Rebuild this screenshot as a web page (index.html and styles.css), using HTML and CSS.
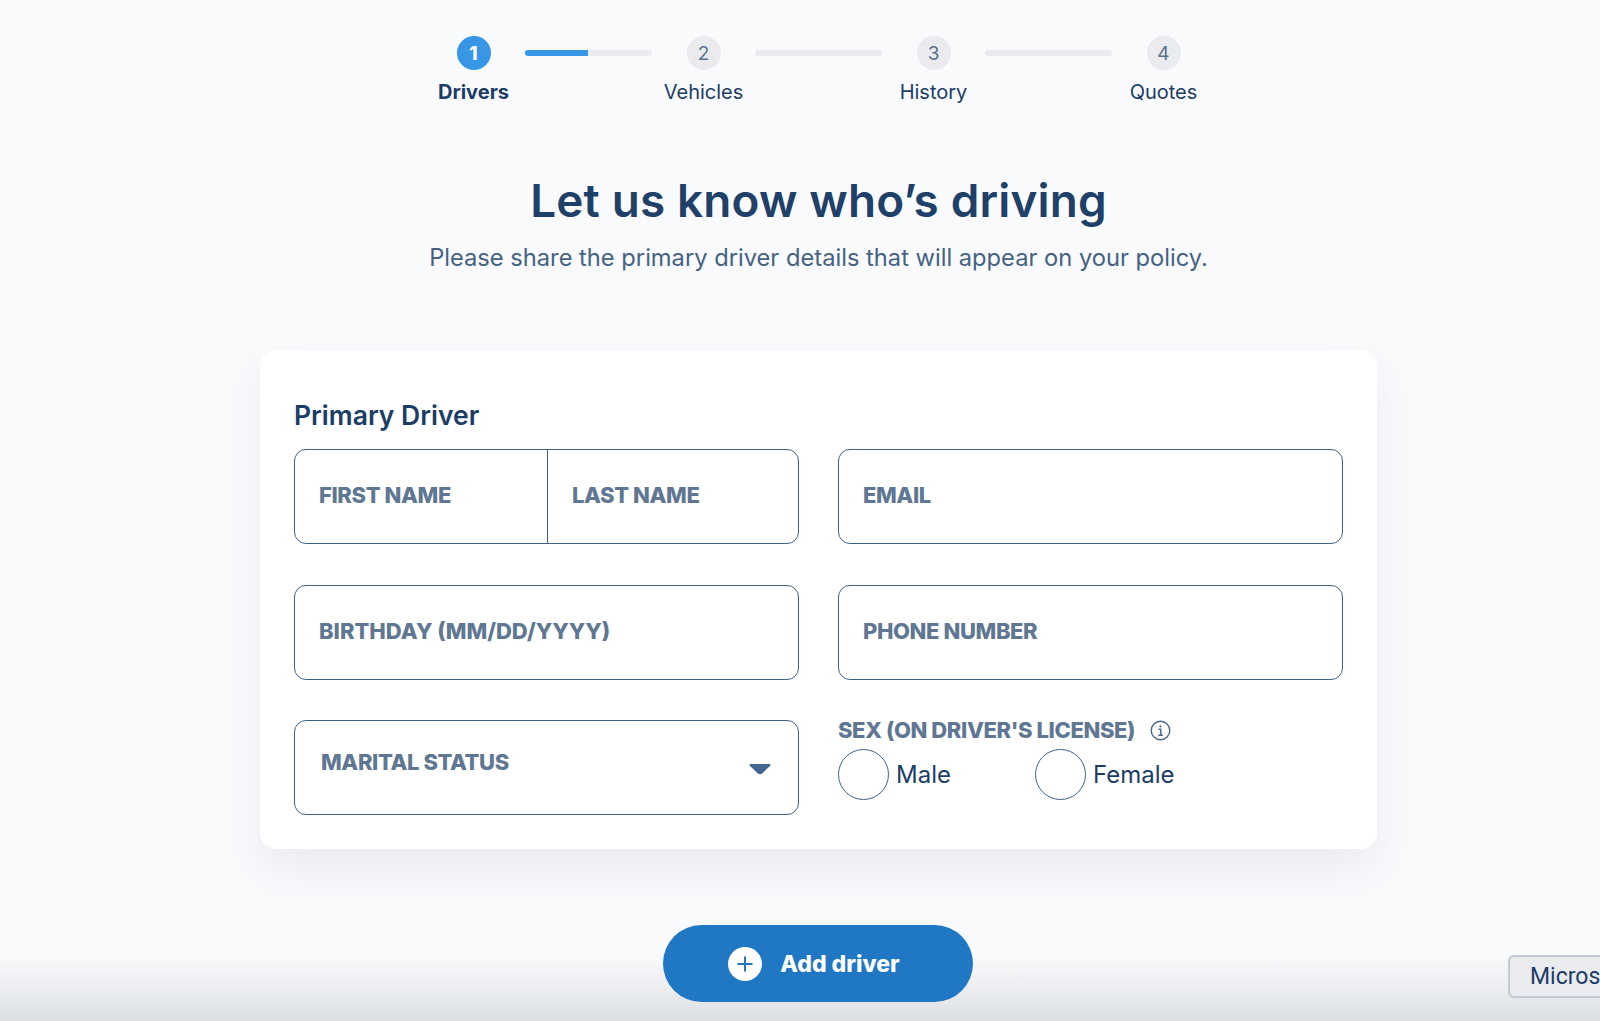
FILE: index.html
```html
<!DOCTYPE html>
<html lang="en">
<head>
  <meta charset="UTF-8" />
  <meta name="viewport" content="width=device-width, initial-scale=1.0"/>
  <title>Drivers</title>
  <link rel="stylesheet" href="styles.css">
</head>
<body>

  <main class="page">

    <!-- Steps -->
    <div class="stepper">
      <div class="step active">
        <span class="step-num">1</span>
        <span class="step-name">Drivers</span>
      </div>
      <div class="step-bar"><div class="step-fill"></div></div>
      <div class="step">
        <span class="step-num">2</span>
        <span class="step-name">Vehicles</span>
      </div>
      <div class="step-bar"></div>
      <div class="step">
        <span class="step-num">3</span>
        <span class="step-name">History</span>
      </div>
      <div class="step-bar"></div>
      <div class="step">
        <span class="step-num">4</span>
        <span class="step-name">Quotes</span>
      </div>
    </div>

    <h1 class="title">Let us know who’s driving</h1>
    <p class="subtitle">Please share the primary driver details that will appear on your policy.</p>

    <!-- Form card -->
    <section class="card">
      <h2 class="card-title">Primary Driver</h2>
      <div class="form-grid">
        <div class="field field-split">
          <div class="field-part"><span class="field-label">FIRST NAME</span></div>
          <div class="field-part field-part-last"><span class="field-label">LAST NAME</span></div>
        </div>
        <div class="field"><span class="field-label">EMAIL</span></div>
        <div class="field"><span class="field-label label-birthday">BIRTHDAY (MM/DD/YYYY)</span></div>
        <div class="field"><span class="field-label">PHONE NUMBER</span></div>
        <div class="field field-select">
          <span class="field-label">MARITAL STATUS</span>
          <svg class="caret" width="22" height="12" viewBox="0 0 22 12">
            <path d="M1.5 1h19a1 1 0 0 1 .7 1.700l-7.500 7.300a4 4 0 0 1-5.400 0L.8 2.700A1 1 0 0 1 1.500 1z" fill="#42668f"/>
          </svg>
        </div>
        <div class="sex-group">
          <div class="sex-title">
            <span class="field-label">SEX (ON DRIVER'S LICENSE)</span>
            <svg class="info-icon" width="21" height="21" viewBox="0 0 21 21" fill="none" stroke="#4f6a88">
              <circle cx="10.500" cy="10.500" r="9.300" stroke-width="1.400"/>
              <circle cx="10.500" cy="6.300" r="1.100" fill="#4f6a88" stroke="none"/>
              <path d="M8.500 9.300h2.300v5.800M8.300 15.200h4.600" stroke-width="1.500"/>
            </svg>
          </div>
          <div class="radios">
            <label class="radio"><span class="radio-dot"></span>Male</label>
            <label class="radio"><span class="radio-dot"></span>Female</label>
          </div>
        </div>
      </div>
    </section>

    <button class="add-btn">
      <svg width="34" height="34" viewBox="0 0 34 34">
        <circle cx="17" cy="17" r="17" fill="#fff"/>
        <path d="M17 9.500v15M9.500 17h15" stroke="#2077c4" stroke-width="2"/>
      </svg>
      Add driver
    </button>
  </main>

  <div class="bottom-fade"></div>
  <div class="float-tag">Micros</div>

</body>
</html>
```

FILE: styles.css
```css
* {
  box-sizing: border-box;
}

html, body {
  height: 100%;
}

body {
  margin: 0;
  position: relative;
  overflow: hidden;
  font-family: Inter, 'Open Sans', sans-serif;
  background-color: #f9fafc;
  color: #1c3d66;
}

.page {
  width: 1117px;
  margin-left: 260px;
  display: flex;
  flex-direction: column;
  align-items: center;
}

/* stepper */
.stepper {
  display: flex;
  align-items: flex-start;
  margin-top: 36px;
}

.step {
  width: 100px;
  display: flex;
  flex-direction: column;
  align-items: center;
}

.step-num {
  width: 34px;
  height: 34px;
  border-radius: 50%;
  display: flex;
  align-items: center;
  justify-content: center;
  background-color: #e9ebef;
  color: #5b718d;
  font-size: 19px;
}

.step-name {
  margin-top: 10px;
  font-size: 20px;
  line-height: 24px;
  color: #1c3d66;
  white-space: nowrap;
}

.step.active .step-num {
  background-color: #3797e6;
  color: #fff;
  font-weight: 800;
}

.step.active .step-name {
  font-weight: 700;
}

.step-bar {
  width: 127px;
  height: 6px;
  margin: 14px 2px 0 1px;
  border-radius: 3px;
  background-color: #e9ebef;
  overflow: hidden;
}

.step-fill {
  width: 50%;
  height: 100%;
  background-color: #3797e6;
}

/* heading */
.title {
  margin: 67px 0 0;
  font-size: 45.800px;
  line-height: 60px;
  font-weight: 600;
  color: #1f4068;
  letter-spacing: 0.2px;
}

.subtitle {
  margin: 12px 0 0;
  font-size: 23.700px;
  line-height: 30px;
  color: #456283;
}

/* card */
.card {
  width: 100%;
  height: 499px;
  margin-top: 77px;
  padding: 48px 34px 0;
  background-color: #fff;
  border-radius: 16px;
  box-shadow: 0 20px 40px rgba(60, 80, 110, 0.08);
}

.card-title {
  margin: 0;
  font-size: 26.500px;
  line-height: 34px;
  font-weight: 600;
  color: #1c3d66;
}

.form-grid {
  display: grid;
  grid-template-columns: 505px 505px;
  grid-auto-rows: 95px;
  column-gap: 39px;
  row-gap: 40.500px;
  margin-top: 17px;
}

.field {
  border: 1px solid #3f638c;
  border-radius: 12px;
  padding: 0 24px 3px;
  display: flex;
  align-items: center;
  background-color: #fff;
}

.field-label {
  font-size: 22px;
  font-weight: 800;
  color: #5f7793;
  letter-spacing: -0.4px;
  white-space: nowrap;
}

.label-birthday {
  letter-spacing: 0;
}

.field-split {
  padding: 0;
}

.field-part {
  width: 252px;
  height: 100%;
  padding: 0 24px 3px;
  display: flex;
  align-items: center;
}

.field-part-last {
  width: auto;
  flex: 1;
  border-left: 1px solid #3f638c;
}

.field-select {
  justify-content: space-between;
  align-items: flex-start;
  padding: 28px 27px 0 26px;
}

.caret {
  margin-top: 14px;
}

.sex-group {
  margin-top: -2px;
}

.sex-title {
  display: flex;
  align-items: center;
  gap: 15px;
  height: 24px;
}

.radios {
  display: flex;
  margin-top: 7px;
}

.radio {
  width: 197px;
  display: flex;
  align-items: center;
  gap: 7px;
  font-size: 24px;
  color: #1c3d66;
}

.radio-dot {
  width: 51px;
  height: 51px;
  border: 1px solid #3f638c;
  border-radius: 50%;
}

/* button */
.add-btn {
  width: 310px;
  height: 77px;
  margin-top: 76px;
  margin-right: 1px;
  padding-right: 14px;
  display: flex;
  align-items: center;
  justify-content: center;
  gap: 18px;
  border: none;
  border-radius: 39px;
  background-color: #2077c4;
  color: #fff;
  font-family: inherit;
  font-size: 23px;
  font-weight: 800;
  position: relative;
  z-index: 2;
}

/* overlays */
.bottom-fade {
  position: absolute;
  left: 0;
  right: 0;
  bottom: 0;
  height: 65px;
  background: linear-gradient(to bottom, rgba(222, 225, 229, 0), #dde0e3);
}

.float-tag {
  position: absolute;
  left: 1508px;
  top: 955px;
  width: 120px;
  height: 43px;
  padding-left: 20px;
  display: flex;
  align-items: center;
  border: 2px solid #c3cad5;
  border-radius: 6px;
  background-color: #e9ebef;
  color: #1c3d66;
  font-family: Roboto, sans-serif;
  font-size: 23px;
}
```
